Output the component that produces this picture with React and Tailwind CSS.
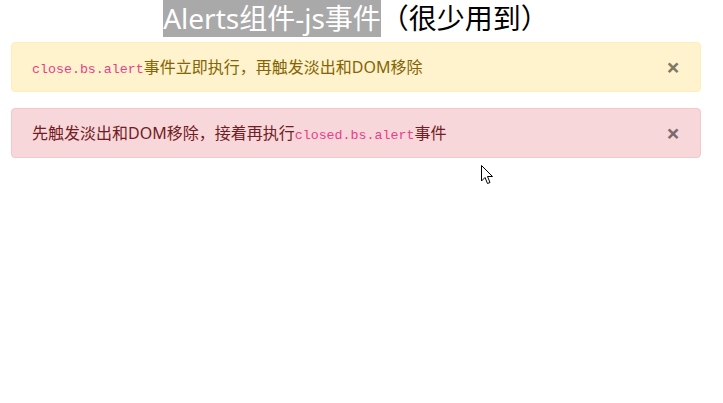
import React from 'react'

const Alert = ({ tone, children }) => {
    const styles = {
        warning: 'bg-[#fff3cd] border-[#ffeeba] text-[#856404]',
        danger: 'bg-[#f8d7da] border-[#f5c6cb] text-[#721c24]',
    }
    return (
        <div className={`relative border rounded-[4px] py-3 pl-5 pr-16 text-[16px] leading-6 h-[50px] ${styles[tone]}`}>
            <p className="h-6 leading-6">{children}</p>
            <button className="absolute right-0 top-0 px-5 py-3 text-[24px] leading-6 font-bold text-black opacity-50">
                ×
            </button>
        </div>
    )
}

const Code = ({ children }) => (
    <code className="font-['Liberation_Mono',monospace] text-[13.3px] leading-none text-[#e83e8c]">{children}</code>
)

export default function App() {
    return (
        <div className="relative w-[723px] h-[403px] bg-white font-['Noto_Sans','Noto_Sans_CJK_SC',sans-serif] text-[#212529]">
            <div className="ml-[11px] w-[690px]">
                <h1 className="text-center text-[28px] leading-9 font-normal mb-[6px]">
                    <span className="bg-[#a9a9a9] text-white">Alerts组件-js事件</span>
                    <span className="text-black">（很少用到）</span>
                </h1>
                <div className="flex flex-col gap-4">
                    <Alert tone="warning">
                        <Code>close.bs.alert</Code>事件立即执行，再触发淡出和DOM移除
                    </Alert>
                    <Alert tone="danger">
                        先触发淡出和DOM移除，接着再执行<Code>closed.bs.alert</Code>事件
                    </Alert>
                </div>
            </div>
            <svg className="absolute left-[481px] top-[165px]" width="13" height="20" viewBox="0 0 13 20">
                <path d="M0.5 0.5 L0.5 16 L4 12.5 L6.5 18.5 L9 17.5 L6.5 11.5 L11.5 11.5 Z" fill="white" stroke="black" strokeWidth="1" strokeLinejoin="miter" />
            </svg>
        </div>
    )
}
